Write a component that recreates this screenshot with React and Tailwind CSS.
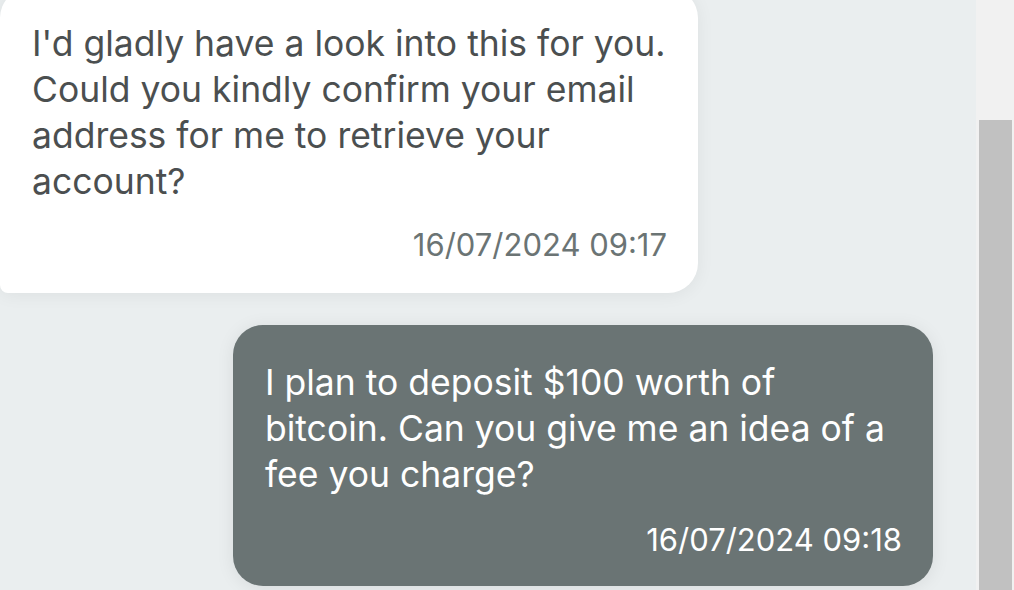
import React from "react";

const messages = [
    {
        from: "agent",
        text: "I'd gladly have a look into this for you. Could you kindly confirm your email address for me to retrieve your account?",
        time: "16/07/2024 09:17",
    },
    {
        from: "me",
        text: "I plan to deposit $100 worth of bitcoin. Can you give me an idea of a fee you charge?",
        time: "16/07/2024 09:18",
    },
];

function Bubble({ msg }) {
    if (msg.from === "agent") {
        return (
            <div className="w-[698px] -mt-[12px] bg-white rounded-[30px] rounded-bl-[8px] pl-[32px] pr-[28px] pt-[33px] pb-[30px] shadow-[0_2px_18px_rgba(0,0,0,0.06)]">
                <p className="text-[35.5px] leading-[46px] text-[#4b4f50]">{msg.text}</p>
                <p className="mt-[22px] text-right pr-[3px] text-[31px] leading-[36px] text-[#6b7474]">{msg.time}</p>
            </div>
        );
    }
    return (
        <div className="self-end mr-[43px] w-[700px] bg-[#6a7474] rounded-[30px] pl-[32px] pr-[26px] pt-[35px] pb-[28px] shadow-[0_2px_18px_rgba(0,0,0,0.08)]">
            <p className="text-[35.5px] leading-[46px] text-white">{msg.text}</p>
            <p className="mt-[24px] text-right pr-[5px] text-[31px] leading-[36px] text-white">{msg.time}</p>
        </div>
    );
}

export default function App() {
    return (
        <div className="w-[1014px] h-[590px] overflow-hidden flex bg-[#eaeeef] font-['Inter',sans-serif]">
            {/* chat area */}
            <div className="flex-1 flex flex-col gap-[32px]">
                {messages.map((m, i) => (
                    <Bubble key={i} msg={m} />
                ))}
            </div>

            {/* scrollbar */}
            <div className="w-[38px] h-full bg-[#f1f1f1] flex flex-col pl-[3px] pr-[2px] pt-[120px]">
                <div className="flex-1 bg-[#c1c1c1]"></div>
            </div>
        </div>
    );
}
